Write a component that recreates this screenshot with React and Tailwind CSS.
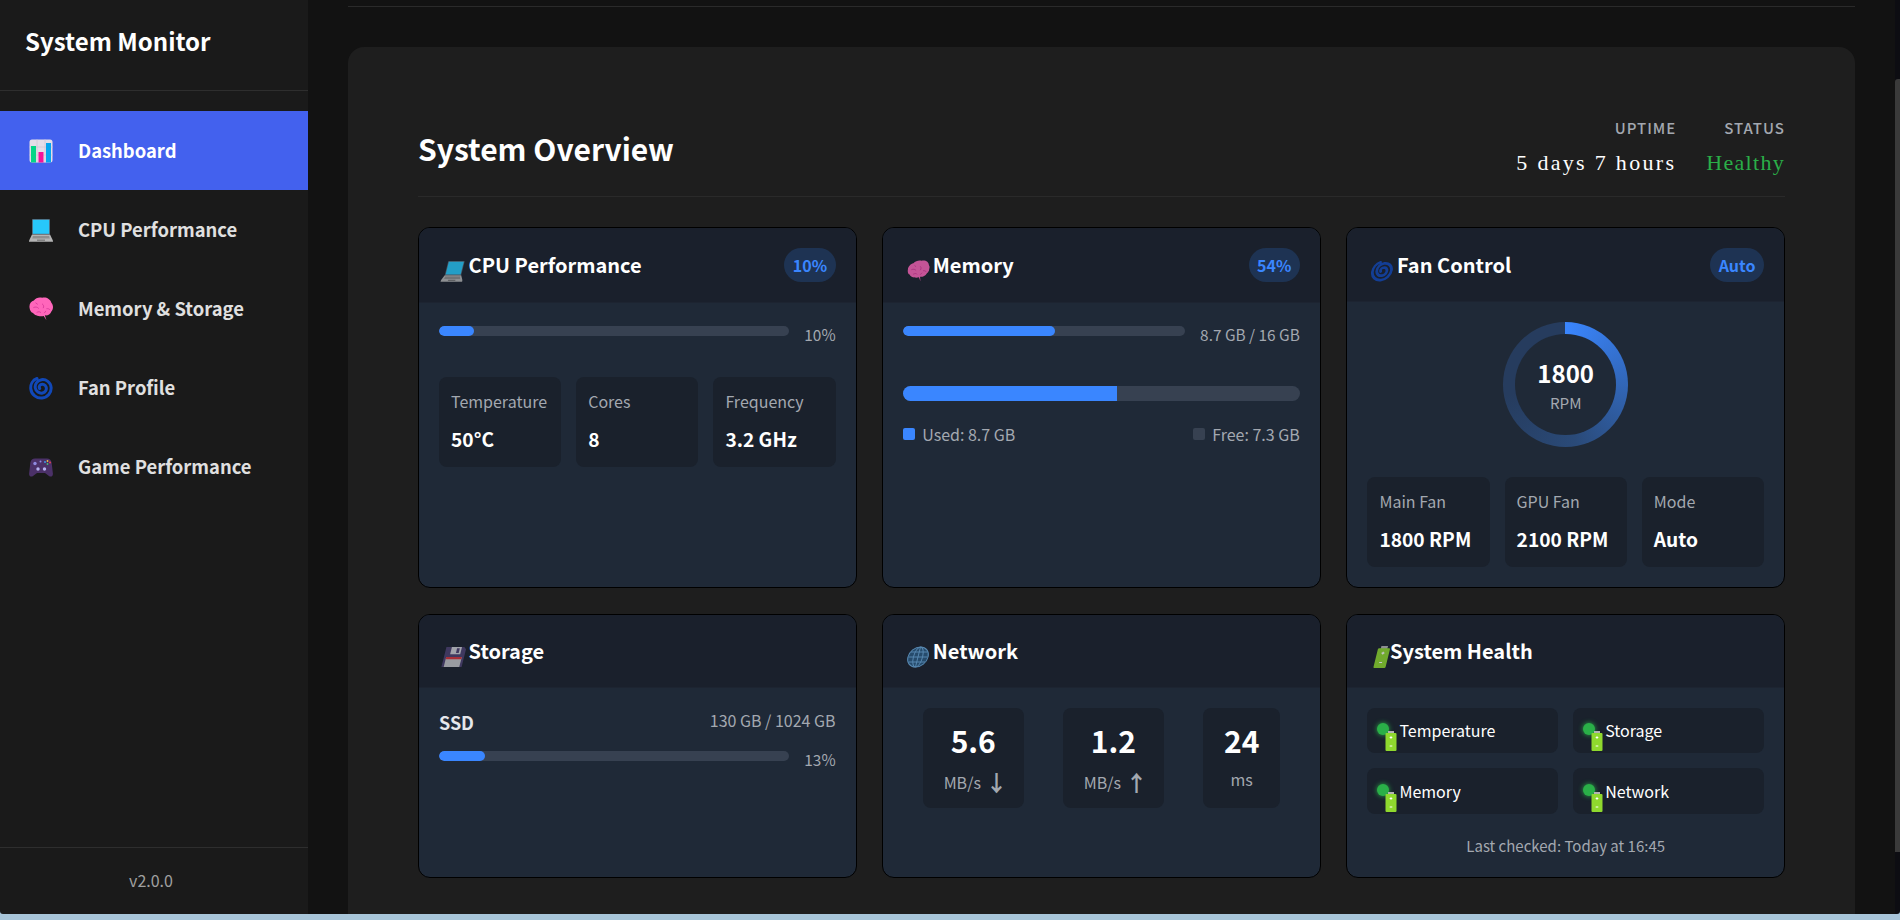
import React from "react";

// emoji in the original are drawn by hand here, no colour emoji font in the sandbox
const ChartIcon = ({ className }) => (
  <svg viewBox="0 0 24 24" className={className}>
    <rect x="0.5" y="0.5" width="23" height="23" rx="2.5" fill="#e4dde8" />
    <path d="M0.5 8h23M0.5 16h23M8 0.5v23M16 0.5v23" stroke="#cfc7d6" strokeWidth="0.8" />
    <rect x="2" y="7" width="5" height="16.5" fill="#04d587" />
    <rect x="9.5" y="13" width="5" height="10.5" fill="#f3129a" />
    <rect x="17" y="4" width="5" height="19.5" fill="#04a6ef" />
  </svg>
);

const LaptopIcon = ({ className }) => (
  <svg viewBox="0 0 24 24" className={className}>
    <rect x="3" y="1" width="18" height="15.5" rx="0.8" fill="#56606e" />
    <rect x="3.8" y="1.8" width="16.4" height="14" fill="#27c8fb" />
    <path d="M3 16.5h18l3 6.2v1H0v-1z" fill="#b4b4b4" />
    <path d="M4 18h16l.8 2.6H3.2z" fill="#8f8f8f" />
    <rect x="8" y="21.6" width="8" height="1.2" fill="#777" />
  </svg>
);

const BrainIcon = ({ className }) => (
  <svg viewBox="1 1.500 22 21.500" className={className}>
    <path
      d="M1.500 11C1 7.500 3 5 5.500 4.500 7 2 10.500 1.200 13 2c3.500-1 7.500 1 8.500 4.500 2 2 2 6 0 8-1 3-4 4-6 3.500l1.500 4.500-2.500-3.900C11.500 19.500 6 18.500 4.800 16 3 15.500 1.800 13.500 1.500 11z"
      fill="#ff66bb"
    />
    <path
      d="M5 11c2-1 3.500-.6 5 .8M13 7.500c1.500 1 1.800 2.500 1 4M17 12c1.500-.3 2.700.2 3.500 1.300M8 15.500c1.500-1 3-1 4 .2M15 16l1.500-2M7 6.500l2 1.500"
      fill="none"
      stroke="#d8399a"
      strokeWidth="0.8"
    />
  </svg>
);

const CycloneIcon = ({ className }) => (
  <svg viewBox="0 0 24 24" className={className}>
    <path
      d="M8 2.500C3.500 4 1.300 8.500 1.800 13c.7 5.700 6 9.600 11.400 9 5.300-.6 9.400-5.300 8.900-10.700C21.600 6.300 17 3 12.500 3.700 8.400 4.300 5.600 8 6.300 12c.6 3.500 4 5.800 7.300 5 2.800-.6 4.400-3.500 3.500-6.100-.8-2.200-3.300-3.300-5.300-2.300-1.500.8-2 2.600-1.100 4"
      fill="none"
      stroke="#1148b8"
      strokeWidth="3"
      strokeLinecap="round"
    />
  </svg>
);

const GamepadIcon = ({ className }) => (
  <svg viewBox="0 0 24 24" className={className}>
    <path
      d="M6 3.500h12c2.500 0 4 1.500 4.600 4l1.300 11c.3 2.500-1.800 3.800-3.600 2.700L16 18H8l-4.300 3.200C1.900 22.300-.2 21 .1 18.500l1.300-11C2 5 3.500 3.500 6 3.500z"
      fill="#4b3168"
    />
    <circle cx="6" cy="8.500" r="1.700" fill="#8f8be0" />
    <circle cx="11.500" cy="6.500" r="1" fill="#8f8be0" />
    <circle cx="9" cy="14" r="1.700" fill="#b5b2f0" />
    <circle cx="15.500" cy="14" r="1.700" fill="#b5b2f0" />
    <circle cx="16" cy="7" r="0.900" fill="#3fa0f0" />
    <circle cx="18.500" cy="6" r="0.900" fill="#f0c040" />
    <circle cx="18.500" cy="9" r="0.900" fill="#40c070" />
    <circle cx="21" cy="7.500" r="0.900" fill="#f04050" />
  </svg>
);

const FloppyIcon = ({ className }) => (
  <svg viewBox="0 0 24 24" className={className}>
    <path d="M1 1h19.500L23 3.500V23H1z" fill="#4c4170" />
    <rect x="7" y="1" width="11" height="8" fill="#cfcfd6" />
    <rect x="13" y="2.500" width="3" height="5" fill="#4c4170" />
    <rect x="3.500" y="12" width="17" height="11" fill="#c4c4c8" />
    <rect x="3.500" y="12" width="17" height="2.500" fill="#d8343c" />
  </svg>
);

const GlobeIcon = ({ className }) => (
  <svg viewBox="0 0 24 24" className={className}>
    <circle cx="12" cy="12" r="11" fill="#2a5a82" />
    <g fill="none" stroke="#6aa8da" strokeWidth="1.100">
      <circle cx="12" cy="12" r="11" />
      <ellipse cx="12" cy="12" rx="5" ry="11" />
      <path d="M12 1v22M1.500 12h21M3 6.500h18M3 17.500h18" />
    </g>
  </svg>
);

const BatteryIcon = ({ className }) => (
  <svg viewBox="0 0 12 20" className={className}>
    <rect x="3" y="0" width="6" height="3" fill="#b3b3b3" />
    <rect x="0.500" y="2" width="11" height="18" rx="1" fill="#8fd92e" />
    <path d="M4.700 6.500h2.600M6 5.200v2.600M4.700 15h2.600" stroke="#fff" strokeWidth="1" />
  </svg>
);

const navItems = [
  { label: "Dashboard", Icon: ChartIcon, active: true },
  { label: "CPU Performance", Icon: LaptopIcon },
  { label: "Memory & Storage", Icon: BrainIcon },
  { label: "Fan Profile", Icon: CycloneIcon },
  { label: "Game Performance", Icon: GamepadIcon },
];

const Sidebar = () => (
  <aside className="w-[308px] shrink-0 flex flex-col bg-[#1a1a1a]">
    <div className="h-[91px] shrink-0 border-b border-[#2e2e2e] px-[25px] pt-[23px]">
      <h1 className="text-[24px] leading-[36px] font-bold text-white">System Monitor</h1>
    </div>
    <nav className="pt-5 flex-1">
      {navItems.map(({ label, Icon, active }) => (
        <a
          key={label}
          className={`h-[79px] flex items-center gap-[25px] px-[29px] text-[18.400px] font-semibold ${
            active ? "bg-[#4361ee] text-white" : "text-[#e0e0e0]"
          }`}
        >
          <Icon className="w-6 h-6 shrink-0" />
          {label}
        </a>
      ))}
    </nav>
    <div className="h-[67px] shrink-0 border-t border-[#2e2e2e] flex items-center justify-center pb-[3px] pr-[6px] text-base text-[#a0a0a0]">
      v2.0.0
    </div>
  </aside>
);

const Card = ({ title, Icon, iconWidth = "w-[29.6px]", badge, children }) => (
  <div className="rounded-xl border border-black bg-[#1f2937] overflow-hidden flex flex-col">
    <div className="flex items-center justify-between bg-[#1a202c] border-b border-[#1d2431] px-5 min-h-[73px] py-5">
      <h3 className="flex items-center text-[20px] leading-[28px] font-semibold text-white">
        <span className={`${iconWidth} shrink-0`}>
          <Icon className="w-[22px] h-[22px] ml-[4px] translate-y-[6px] -skew-x-[14deg] opacity-75" />
        </span>
        {title}
      </h3>
      {badge && (
        <span className="h-[34px] px-[8.500px] flex items-center rounded-full bg-[#1e3353] text-base font-semibold text-[#3a86ff]">
          {badge}
        </span>
      )}
    </div>
    <div className="flex-1 p-5">{children}</div>
  </div>
);

const Stat = ({ label, value }) => (
  <div className="h-[90px] rounded-lg bg-[#1a212c] px-3 pt-[12px]">
    <div className="text-base leading-[24px] text-[#a3a8b0]">{label}</div>
    <div className="mt-[12px] text-[19.200px] leading-[28px] font-bold text-white">{value}</div>
  </div>
);

const ProgressRow = ({ pct, text }) => (
  <div className="flex items-start gap-[15px]">
    <div className="flex-1 h-[10px] mt-[3px] rounded-full bg-[#374151] overflow-hidden">
      <div className="h-full rounded-full bg-[#3a86ff]" style={{ width: `${pct}%` }} />
    </div>
    <span className="text-[15.400px] leading-[24px] -mt-[1px] text-[#a3a8b0]">{text}</span>
  </div>
);

const NetBox = ({ value, unit, arrow }) => (
  <div className="h-[100px] rounded-lg bg-[#1a212c] px-[21px] pt-[10px] text-center">
    <div className="text-[30px] leading-[44px] font-bold text-white">{value}</div>
    <div
      className={`flex items-center justify-center text-base leading-[28px] text-[#a3a8b0] whitespace-nowrap ${
        arrow ? "mt-[6px]" : "mt-[3px]"
      }`}
    >
      {unit}
      {arrow && (
        <span className="ml-[9px] w-[13px] flex justify-center text-[22px] leading-[24px] font-semibold -translate-y-[1px]">
          {arrow}
        </span>
      )}
    </div>
  </div>
);

const HealthItem = ({ label }) => (
  <div className="h-[45.500px] rounded-lg bg-[#1a212c] flex items-center pl-[10px] gap-[10px] text-base text-white">
    <span className="relative w-[12px] h-[12px] -translate-y-[1px] rounded-full bg-[#2aaf48] shadow-[0_0_5px_#2aaf48]">
      <BatteryIcon className="absolute left-[8px] top-[8px] w-[12px] h-[20px] max-w-none" />
    </span>
    <span>{label}</span>
  </div>
);

const App = () => (
  <div className="h-[920px] flex flex-col overflow-hidden bg-[#a8c5d9] font-['Noto_Sans_CJK_SC','Noto_Sans',sans-serif]">
    <div className="flex-1 min-h-0 flex rounded-b-[3px] overflow-hidden">
      <Sidebar />
      <main className="flex-1 min-w-0 bg-[#121212] px-10 overflow-hidden">
        <div className="h-[7px] border-b border-[#2a2a2a]" />
        <section className="mt-10 h-[900px] rounded-t-2xl bg-[#1e1e1e] px-[70px] pt-[68px]">
          <div className="h-[82px] flex items-center justify-between border-b border-[#2a2a2a] pb-[2px]">
            <h2 className="text-[30px] leading-[44px] font-bold text-white -mt-[14px]">System Overview</h2>
            <div className="flex gap-[30px] text-right -mt-[13.500px]">
              <div>
                <div className="text-[15px] leading-[20px] font-medium tracking-[1px] text-[#a3a8b0]">UPTIME</div>
                <div className="mt-[9.500px] text-[22px] leading-[30px] tracking-[2.300px] text-white font-['Liberation_Serif',serif]">
                  5 days 7 hours
                </div>
              </div>
              <div>
                <div className="text-[15px] leading-[20px] font-medium tracking-[1px] text-[#a3a8b0]">STATUS</div>
                <div className="mt-[9.500px] text-[22px] leading-[30px] tracking-[1.300px] text-[#2aaf48] font-['Liberation_Serif',serif]">
                  Healthy
                </div>
              </div>
            </div>
          </div>

          <div className="mt-[30px] grid grid-cols-3 grid-rows-[361px_264px] gap-[25.600px]">
            <Card title="CPU Performance" Icon={LaptopIcon} badge="10%">
              <ProgressRow pct={10} text="10%" />
              <div className="mt-[31px] grid grid-cols-3 gap-[15px]">
                <Stat label="Temperature" value="50°C" />
                <Stat label="Cores" value="8" />
                <Stat label="Frequency" value="3.2 GHz" />
              </div>
            </Card>

            <Card title="Memory" Icon={BrainIcon} badge="54%">
              <ProgressRow pct={54} text="8.7 GB / 16 GB" />
              <div className="mt-[40px] h-[15px] rounded-full bg-[#374151] overflow-hidden">
                <div className="h-full bg-[#3a86ff]" style={{ width: "54%" }} />
              </div>
              <div className="mt-[22px] flex justify-between text-base leading-[22px] text-[#a3a8b0]">
                <span className="flex items-center gap-[7px]">
                  <span className="w-3 h-3 rounded-[2px] bg-[#3a86ff]" />
                  Used: 8.7 GB
                </span>
                <span className="flex items-center gap-[7px]">
                  <span className="w-3 h-3 rounded-[2px] bg-[#374151]" />
                  Free: 7.3 GB
                </span>
              </div>
            </Card>

            <Card title="Fan Control" Icon={CycloneIcon} badge="Auto">
              <div className="flex justify-center">
                <div className="w-[125px] h-[125px] rounded-full flex items-center justify-center bg-[conic-gradient(#3a86ff_0deg,#2a4a78_170deg,#263c5e_260deg,#263c5e_360deg)]">
                  <div className="w-[101px] h-[101px] rounded-full bg-[#1f2937] flex flex-col items-center justify-center">
                    <div className="text-[24px] leading-[34px] font-semibold text-white -mt-[2px]">1800</div>
                    <div className="text-[15.200px] leading-[20px] text-[#a3a8b0] mt-[2px]">RPM</div>
                  </div>
                </div>
              </div>
              <div className="mt-[30px] grid grid-cols-3 gap-[15px]">
                <Stat label="Main Fan" value="1800 RPM" />
                <Stat label="GPU Fan" value="2100 RPM" />
                <Stat label="Mode" value="Auto" />
              </div>
            </Card>

            <Card title="Storage" Icon={FloppyIcon}>
              <div className="flex justify-between items-start">
                <span className="text-[18px] leading-[26px] font-semibold text-[#e5e7eb] mt-[1px]">SSD</span>
                <span className="text-base leading-[24px] text-[#a3a8b0]">130 GB / 1024 GB</span>
              </div>
              <div className="mt-[13px]">
                <ProgressRow pct={13} text="13%" />
              </div>
            </Card>

            <Card title="Network" Icon={GlobeIcon}>
              <div className="flex justify-around">
                <NetBox value="5.6" unit="MB/s" arrow="↓" />
                <NetBox value="1.2" unit="MB/s" arrow="↑" />
                <NetBox value="24" unit="ms" />
              </div>
            </Card>

            <Card title="System Health" Icon={BatteryIcon} iconWidth="w-[22.600px]">
              <div className="grid grid-cols-2 gap-[15px]">
                <HealthItem label="Temperature" />
                <HealthItem label="Storage" />
                <HealthItem label="Memory" />
                <HealthItem label="Network" />
              </div>
              <div className="mt-[20px] text-center text-[15px] leading-[24px] text-[#a3a8b0]">
                Last checked: Today at 16:45
              </div>
            </Card>
          </div>
        </section>
      </main>
      <div className="w-[5px] shrink-0 bg-[#0d0d12]">
        <div className="mt-[79px] h-[773px] rounded-tl-[3px] bg-[#3a3a3a]" />
      </div>
    </div>
    <div className="h-[6px] shrink-0" />
  </div>
);

export default App;
